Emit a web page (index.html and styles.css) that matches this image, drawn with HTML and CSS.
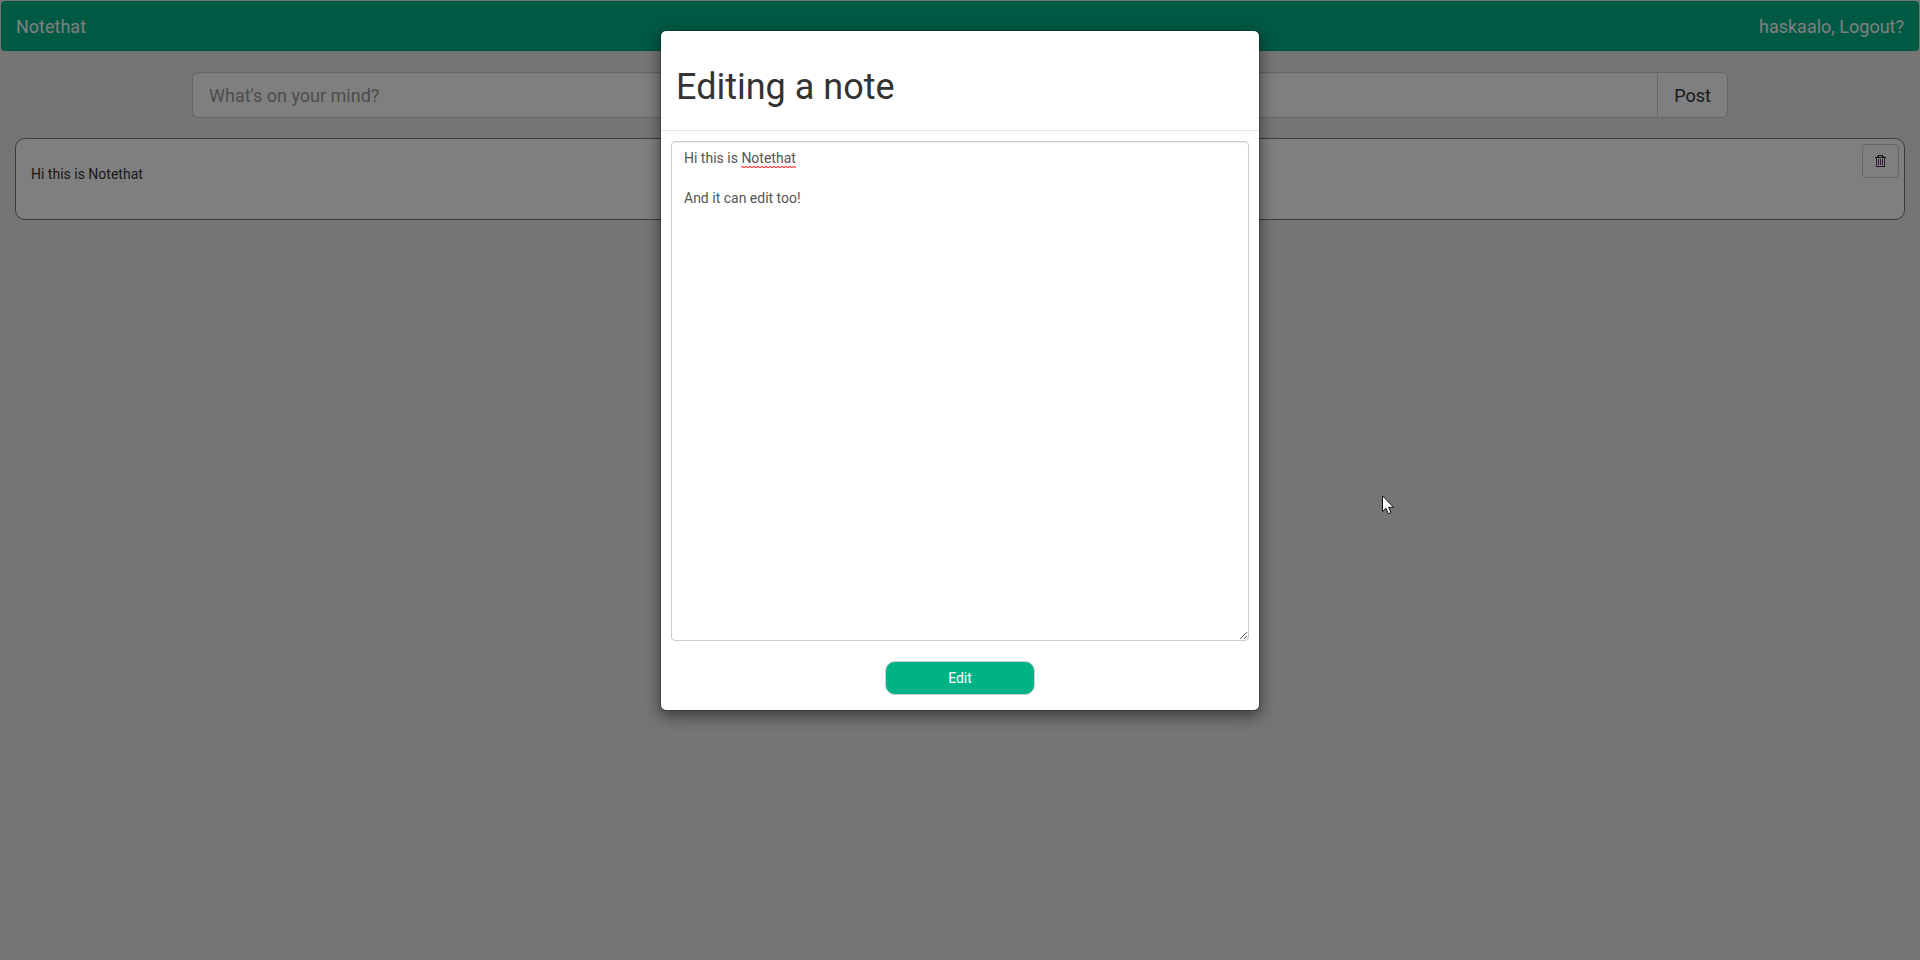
FILE: index.html
```html
<!DOCTYPE html>
<html lang="en">
<head>
<meta charset="utf-8">
<title>Notethat</title>
<link rel="stylesheet" href="styles.css">
</head>
<body>
<nav class="navbar">
  <a class="brand">Notethat</a>
  <a class="brand">haskaalo, Logout?</a>
</nav>
<main>
  <form class="composer">
    <input class="composer-input" type="text" placeholder="What's on your mind?">
    <button class="composer-btn" type="button">Post</button>
  </form>
  <article class="note">
    <p class="note-text">Hi this is Notethat</p>
    <button class="trash-btn" type="button" aria-label="Delete">
      <svg class="trash-icon" width="11" height="12" viewBox="0 0 11 12" shape-rendering="crispEdges">
        <path class="trash-dark" d="M3 0h5v1h1v1h2v1H0V2h2V1h1zM4 1v1h3V1zM1 11h9v1H1z" fill-rule="evenodd"/>
        <path class="trash-tint" d="M1 3h1v8H1zM9 3h1v8H9zM3 4h1v6H3zM5 4h1v6H5zM7 4h1v6H7z"/>
      </svg>
    </button>
  </article>
</main>
<div class="backdrop">
  <section class="modal">
    <header class="modal-header"><h1 class="modal-title">Editing a note</h1></header>
    <div class="modal-body">
      <div class="editor">Hi this is <span class="misspelled">Notethat</span>

And it can edit too!</div>
    </div>
    <footer class="modal-footer"><button class="edit-btn" type="button">Edit</button></footer>
  </section>
</div>
<svg class="cursor" width="13" height="20" viewBox="0 0 13 20"><path d="M.5.8v15.700l3.500-3.300 2.400 5.600 2.600-1.100-2.400-5.400h5z"/></svg>
</body>
</html>
```
FILE: styles.css
```css
* { box-sizing: border-box; }
body {
  margin: 0;
  height: 960px;
  overflow: hidden;
  background: #eaeaea;
  color: #333;
  font: 14px/20px Roboto, sans-serif;
}
button, input { font-family: inherit; }
.navbar {
  display: flex;
  justify-content: space-between;
  align-items: center;
  height: 52px;
  padding: 2px 15px 0;
  border: 1px solid #e7e7e7;
  border-radius: 4px;
  background: #00b386;
  background-clip: padding-box;
}
.brand { color: #fff; font-size: 18px; line-height: 20px; }
main { padding: 20px 15px; }
.composer { display: flex; width: 1536px; height: 46px; margin: 0 auto 20px; }
.composer-input {
  flex: 1;
  padding: 10px 16px;
  border: 1px solid #ccc;
  border-right: 0;
  border-radius: 6px 0 0 6px;
  background: #fff;
  font-size: 18px;
  box-shadow: inset 0 1px 1px rgba(0, 0, 0, .075);
}
.composer-input::placeholder { color: #999; opacity: 1; }
.composer-btn {
  width: 71px;
  padding: 0;
  border: 1px solid #ccc;
  border-radius: 0 6px 6px 0;
  background: #fff;
  color: #333;
  font-size: 18px;
}
.note {
  display: flex;
  justify-content: space-between;
  align-items: flex-start;
  height: 82px;
  padding: 5px 5px 0 15px;
  border: 1px solid #777;
  border-radius: 10px;
  background: #fff;
}
.note-text { margin: 20px 0 0; }
.trash-btn {
  display: flex;
  justify-content: center;
  align-items: center;
  width: 37px;
  height: 34px;
  padding: 0 1px 0 0;
  border: 1px solid #ccc;
  border-radius: 4px;
  background: #fff;
}
.trash-dark { fill: #333; }
.trash-tint { fill: #703078; }
.backdrop {
  position: absolute;
  inset: 0;
  padding-top: 30px;
  background: rgba(0, 0, 0, .5);
}
.modal {
  width: 600px;
  height: 681px;
  margin: 0 auto;
  border: 1px solid rgba(0, 0, 0, .2);
  border-radius: 6px;
  background: #fff;
  background-clip: padding-box;
  box-shadow: 0 5px 15px rgba(0, 0, 0, .5);
}
.modal-header { height: 100px; padding: 36px 15px 0; border-bottom: 1px solid #e5e5e5; }
.modal-title { margin: 0; font-size: 36px; font-weight: 400; line-height: 40px; }
.modal-body { padding: 10px 10px 20px; }
.editor {
  height: 500px;
  padding: 6px 12px;
  border: 1px solid #ccc;
  border-radius: 4px;
  color: #555;
  white-space: pre-wrap;
  overflow: auto;
  resize: both;
  box-shadow: inset 0 1px 1px rgba(0, 0, 0, .075);
}
/* Spelling squiggle: two rows of dashes, half a period apart */
.misspelled {
  padding-bottom: 2px;
  background:
    linear-gradient(90deg, #f44 2px, #fbb 2px) 0 calc(100% - 1px) / 4px 1px repeat-x,
    linear-gradient(90deg, #fbb 2px, #f44 2px) 0 100% / 4px 1px repeat-x;
}
.modal-footer { display: flex; justify-content: center; }
.edit-btn {
  width: 150px;
  height: 34px;
  padding: 0;
  border: 1px solid #ccc;
  border-radius: 10px;
  background: #00b386;
  color: #fff;
  font-size: 14px;
}
.cursor { position: absolute; left: 1382px; top: 495px; fill: #fff; stroke: #111; }
```
